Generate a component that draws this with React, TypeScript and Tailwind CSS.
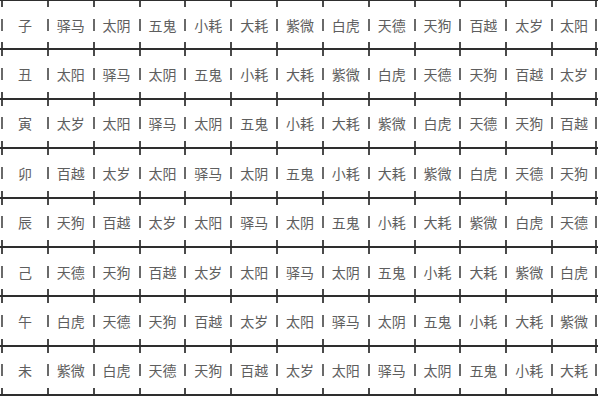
const branches = ["子", "丑", "寅", "卯", "辰", "己", "午", "未"];
const stars = ["驿马", "太阴", "五鬼", "小耗", "大耗", "紫微", "白虎", "天德", "天狗", "百越", "太岁", "太阳"];

// each row is the star list shifted one step to the right
const rowCells = (i: number) => [branches[i], ...stars.map((_, j) => stars[(j - i + 12) % 12])];

const Ticks = () => (
  <div className="flex h-full w-[2px] shrink-0 flex-col justify-between">
    <div className="h-[6px] bg-[#4a4a4a]" />
    <div className="h-[12px] bg-[#6a6a6a]" />
    <div className="h-[6px] bg-[#4a4a4a]" />
  </div>
);

const Cell = ({ text, last }: { text: string; last: boolean }) => (
  <div className="flex h-full">
    <Ticks />
    <div className="flex flex-1 items-center justify-center">{text}</div>
    {last && <Ticks />}
  </div>
);

export default function App() {
  return (
    <div
      className="h-[400px] w-[600px] overflow-hidden bg-white text-[14px] leading-none text-[#5e5e5e]"
      style={{ fontFamily: '"Noto Sans CJK SC", "Noto Sans", sans-serif' }}
    >
      <div className="mt-[-1px] w-[598px] border-t-2 border-[#2e2e2e]">
        {branches.map((_, i) => (
          <div key={i} className="h-[49.4px] border-b-2 border-[#2e2e2e] px-[1px]">
            <div className="grid h-full grid-cols-13">
              {rowCells(i).map((t, j) => (
                <Cell key={j} text={t} last={j === 12} />
              ))}
            </div>
          </div>
        ))}
      </div>
    </div>
  );
}
